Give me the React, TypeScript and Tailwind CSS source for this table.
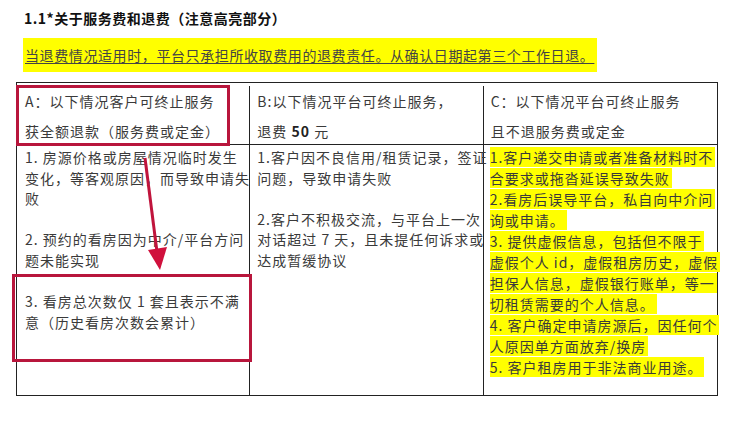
import React from 'react';

const colA = [
  '1. 房源价格或房屋情况临时发生',
  '变化，等客观原因，而导致申请失',
  '败',
  '',
  '2. 预约的看房因为中介/平台方问',
  '题未能实现',
  '',
  '3. 看房总次数仅 1 套且表示不满',
  '意（历史看房次数会累计）',
];

const colB = [
  '1.客户因不良信用/租赁记录，签证',
  '问题，导致申请失败',
  '',
  '2.客户不积极交流，与平台上一次',
  '对话超过 7 天，且未提任何诉求或',
  '达成暂缓协议',
];

const colC = [
  '1.客户递交申请或者准备材料时不',
  '合要求或拖沓延误导致失败',
  '2.看房后误导平台，私自向中介问',
  '询或申请。',
  '3. 提供虚假信息，包括但不限于',
  '虚假个人 id，虚假租房历史，虚假',
  '担保人信息，虚假银行账单，等一',
  '切租赁需要的个人信息。',
  '4. 客户确定申请房源后，因任何个',
  '人原因单方面放弃/换房',
  '5. 客户租房用于非法商业用途。',
];

const font = 'font-["Noto_Sans_CJK_SC","Noto_Sans",sans-serif]';

export default function App() {
  return (
    <div className={`relative w-[742px] h-[427px] bg-white overflow-hidden text-[#3a3a3a] ${font}`}>
      <div className="relative pt-[8px] pl-[24px] text-[14px] leading-[20px] font-bold text-[#111] tracking-[0.5px] whitespace-nowrap">
        1.1*关于服务费和退费（注意高亮部分）
      </div>

      <div className="relative ml-[23px] mt-[10px] w-[574px] h-[34px] bg-[#ffff00] pl-[2px] flex items-center">
        <span className="text-[14px] tracking-[0.6px] underline underline-offset-2 whitespace-nowrap text-[#444]">
          当退费情况适用时，平台只承担所收取费用的退费责任。从确认日期起第三个工作日退。
        </span>
      </div>

      <div className="relative ml-[16px] mt-[10px] w-[702px] border border-[#222] text-[14px] tracking-[1px]">
        <div className="grid grid-cols-3 h-[62px] border-b border-[#222] leading-[30px] pt-[3px]">
          <div className="px-[8px] border-r border-[#222] whitespace-nowrap">
            <div>A：以下情况客户可终止服务</div>
            <div>获全额退款（服务费或定金）</div>
          </div>
          <div className="px-[7px] border-r border-[#222] whitespace-nowrap">
            <div>B:以下情况平台可终止服务，</div>
            <div>退费 <b className="text-[#222]">50</b> 元</div>
          </div>
          <div className="px-[7px] whitespace-nowrap">
            <div>C：以下情况平台可终止服务</div>
            <div>且不退服务费或定金</div>
          </div>
        </div>
        <div className="grid grid-cols-3 h-[250px]">
          <div className="px-[8px] pt-[2px] border-r border-[#222] leading-[20.6px] whitespace-nowrap">
            {colA.map((l, i) => (
              <div key={i} className="h-[20.6px]">{l}</div>
            ))}
          </div>
          <div className="px-[7px] pt-[2px] border-r border-[#222] leading-[20.6px] whitespace-nowrap">
            {colB.map((l, i) => (
              <div key={i} className="h-[20.6px]">{l}</div>
            ))}
          </div>
          <div className="px-[6px] pt-[2px] leading-[21px] whitespace-nowrap">
            {colC.map((l, i) => (
              <div key={i} className="h-[21px]">
                <span className="bg-[#ffff00] pr-[2px]">{l}</span>
              </div>
            ))}
          </div>
        </div>
      </div>

      {/* annotations */}
      <div className="absolute left-[16px] top-[85px] w-[214px] h-[61px] border-[3px] border-[#b8163c]" />
      <div className="absolute left-[12px] top-[274px] w-[240px] h-[88px] border-[3px] border-[#b8163c]" />
      <svg className="absolute left-0 top-0" width="742" height="427">
        <line x1="145" y1="158" x2="157" y2="252" stroke="#c0143c" strokeWidth="3" />
        <polygon points="148,250 167,247 160,270" fill="#d0103c" />
      </svg>
    </div>
  );
}
